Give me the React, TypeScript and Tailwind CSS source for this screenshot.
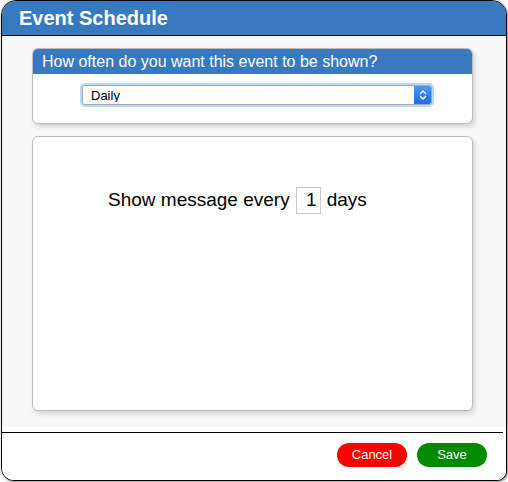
import React from "react";

const font = { fontFamily: '"Liberation Sans", Arial, Helvetica, sans-serif' };

function Chevrons() {
  return (
    <svg width="8" height="12" viewBox="0 0 8 12" fill="none" stroke="white" strokeWidth="1.4" strokeLinecap="round" strokeLinejoin="round">
      <path d="M1.5 4.5 L4 2 L6.5 4.5" />
      <path d="M1.5 7.5 L4 10 L6.5 7.5" />
    </svg>
  );
}

export default function App() {
  return (
    <div className="h-[482px] w-[508px] bg-white pl-px" style={font}>
      <div className="flex h-[481px] w-[506px] flex-col overflow-hidden rounded-tl-[15px] rounded-tr-[15px] rounded-bl-[13px] rounded-br-[10px] border border-black bg-white shadow-[1px_1px_3px_rgba(0,0,0,0.5)]">
        <header className="flex h-[35px] shrink-0 items-center border-b border-black bg-[#3979bf] pl-[17px]">
          <h1 className="text-[20px] font-bold leading-none text-white">Event Schedule</h1>
        </header>

        <main className="flex h-[391px] shrink-0 flex-col gap-[12px] bg-[#f8f8f8] pl-[30px] pt-[12px]">
          <section className="h-[76px] w-[441px] rounded-[6px] border border-[#bdbdbd] bg-white shadow-[2px_3px_5px_rgba(0,0,0,0.15)]">
            <div className="flex h-[25px] items-center rounded-t-[5px] bg-[#3979bf] pl-[9px] text-[16px] leading-none text-white">
              How often do you want this event to be shown?
            </div>
            <div className="pl-[47px] pt-[9px]">
              <div className="flex h-[24px] w-[354px] rounded-[5px] bg-[#b7daf9] p-[2px]">
                <div className="flex flex-1 overflow-hidden rounded-[3px] border border-[#a8a8a8] bg-white">
                  <select
                    className="flex-1 appearance-none bg-white pl-[8px] text-[13px] leading-none text-black outline-none"
                    style={font}
                    defaultValue="Daily"
                  >
                    <option>Daily</option>
                    <option>Weekly</option>
                    <option>Monthly</option>
                  </select>
                  <span className="flex w-[17px] items-center justify-center bg-gradient-to-b from-[#4b98fa] to-[#1a6cf0]">
                    <Chevrons />
                  </span>
                </div>
              </div>
            </div>
          </section>

          <section className="h-[275px] w-[441px] rounded-[6px] border border-[#bdbdbd] bg-white pl-[75px] pt-[49px] shadow-[2px_3px_5px_rgba(0,0,0,0.15)]">
            <div className="flex items-center gap-[6px] text-[19px] text-black">
              <span>Show message every</span>
              <input
                className="h-[27px] w-[25px] border border-[#c8c8c8] bg-white pr-[3px] text-right text-[19px] text-black outline-none"
                style={font}
                defaultValue="1"
              />
              <span>days</span>
            </div>
          </section>
        </main>

        <div className="h-[5px] shrink-0 bg-white" />
        <div className="h-px w-[501px] shrink-0 bg-black" />

        <footer className="flex flex-1 justify-end gap-[10px] bg-white pr-[19px] pt-[10px]">
          <button className="h-[24px] w-[70px] rounded-full bg-[#ff0000] text-[13px] text-white" style={font}>
            Cancel
          </button>
          <button className="h-[24px] w-[70px] rounded-full bg-[#008a00] text-[13px] text-white" style={font}>
            Save
          </button>
        </footer>
      </div>
    </div>
  );
}
